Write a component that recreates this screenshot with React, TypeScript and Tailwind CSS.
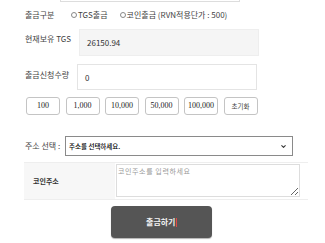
import { ChevronDown } from 'lucide-react';

const amounts = ['100', '1,000', '10,000', '50,000', '100,000'];

function Radio({ label }: { label: string }) {
    return (
        <span className="flex items-center">
            <span className="inline-block w-[6px] h-[6px] rounded-full border border-[#888] mr-[1px]" />
            {label}
        </span>
    );
}

export default function App() {
    return (
        <div
            className="w-[325px] h-[243px] bg-white overflow-hidden text-[#444] text-[8px] leading-[12px]"
            style={{ fontFamily: '"Noto Sans CJK KR", "Noto Sans", sans-serif' }}
        >
            {/* cut-off field from the section above */}
            <div className="ml-[60px] w-[180px] h-[2px] border-x border-b border-[#ddd]" />

            <div className="pl-[25px]">
                <div className="flex items-center mt-[7px] h-[12px]">
                    <span className="w-[46px]">출금구분</span>
                    <Radio label="TGS출금" />
                    <span className="ml-[12px]">
                        <Radio label="코인출금 (RVN적용단가 : 500)" />
                    </span>
                </div>

                <div className="flex items-start mt-[8px]">
                    <span className="w-[54px] pt-[4px] whitespace-nowrap">현재보유 TGS</span>
                    <div className="w-[180px] h-[27px] bg-[#f5f5f5] border border-[#eee] flex items-center pl-[7px] text-[#333]">
                        26150.94
                    </div>
                </div>

                <div className="flex items-start mt-[8px]">
                    <span className="w-[52px] pt-[5px]">출금신청수량</span>
                    <div className="w-[180px] h-[26px] border border-[#e4e4e4] flex items-center pl-[7px] pt-[2px] text-[#333]">
                        0
                    </div>
                </div>

                <div className="flex gap-[5.5px] mt-[7px] ml-[1px]">
                    {amounts.map(a => (
                        <button
                            key={a}
                            className="w-[34px] h-[18px] border border-[#c4c4c4] rounded-[3px] bg-white text-[#222] text-[8px] flex items-center justify-center"
                            style={{ fontFamily: '"Liberation Serif", serif' }}
                        >
                            {a}
                        </button>
                    ))}
                    <button className="w-[34px] h-[18px] border border-[#c4c4c4] rounded-[3px] bg-white text-[#444] text-[6.5px] flex items-center justify-center">
                        초기화
                    </button>
                </div>

                <div className="flex items-center mt-[21px]">
                    <span className="w-[40px] whitespace-nowrap">주소 선택 :</span>
                    <div className="w-[228px] h-[20px] border border-[#8a8a8a] flex items-center justify-between pl-[3px] pr-[5px] text-black text-[6.5px] font-medium">
                        <span>주소를 선택하세요.</span>
                        <ChevronDown size={7} strokeWidth={3.5} className="text-[#333]" />
                    </div>
                </div>
            </div>

            <div className="ml-[24px] w-[284px] mt-[6px] flex border-y border-[#eee]">
                <div className="w-[91px] bg-[#f7f7f7] flex items-center pl-[9px] text-[#333] text-[7px] font-semibold">
                    코인주소
                </div>
                <div className="flex-1 pt-[1px] pb-[2px] pl-[1px] pr-[8px]">
                    <textarea
                        className="block w-[184px] h-[33px] border border-[#ddd] text-[7px] leading-[10px] tracking-[0.6px] px-[1px] py-[1px] placeholder:text-[#999] outline-none"
                        placeholder="코인주소를 입력하세요"
                    />
                </div>
            </div>

            <div className="flex justify-center mt-[6px] pr-[2px]">
                <button className="w-[101px] h-[32px] rounded-[4px] bg-[#555] text-[#f2f2f2] text-[8px] font-semibold flex items-center justify-center shadow-[0_1px_1px_rgba(0,0,0,0.3)]">
                    출금하기
                    <span className="inline-block w-[1px] h-[9px] bg-[#e04848] ml-[0.5px]" />
                </button>
            </div>
        </div>
    );
}
